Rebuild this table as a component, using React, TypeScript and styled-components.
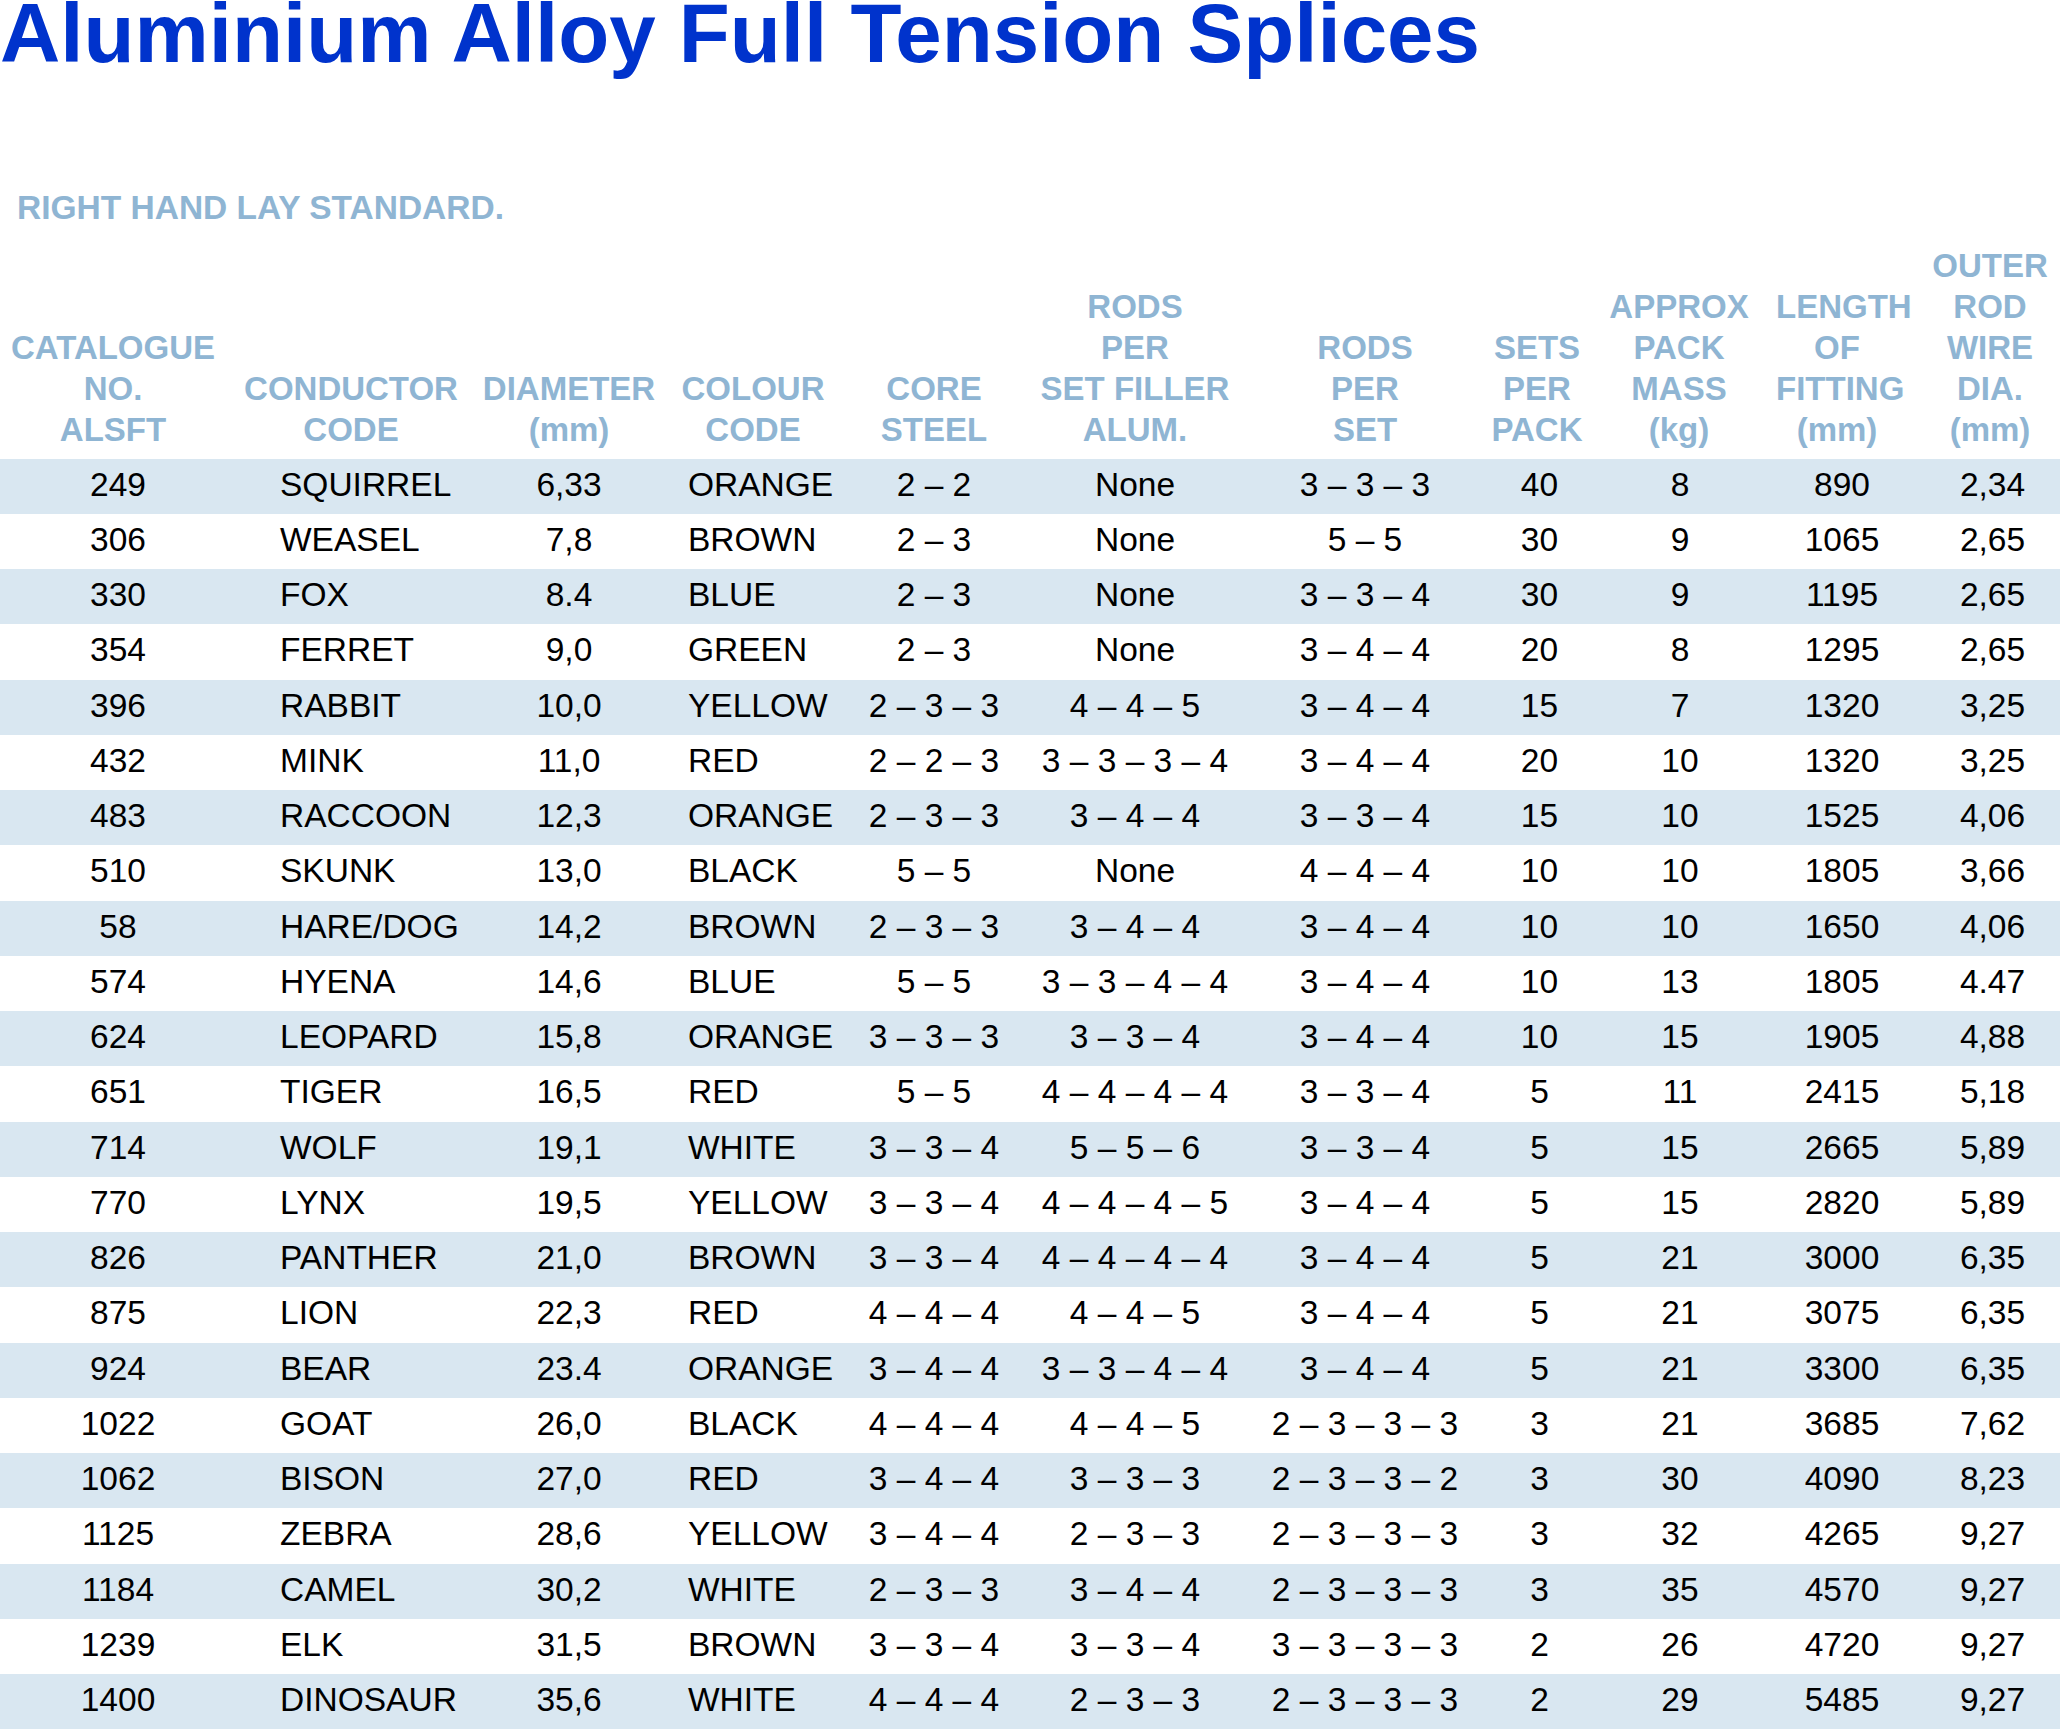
import React from "react";
import styled, { createGlobalStyle } from "styled-components";

const GlobalStyle = createGlobalStyle`
  html, body {
    margin: 0;
    padding: 0;
    background: #ffffff;
  }
  body {
    font-family: "Liberation Sans", Arial, Helvetica, sans-serif;
    overflow: hidden;
  }
`;

const COLS = "232px 238px 198px 170px 192px 210px 250px 94px 192px 128px 156px";

const Page = styled.div`
  width: 2060px;
  height: 1731px;
  overflow: hidden;
  display: flex;
  flex-direction: column;
`;

const Title = styled.h1`
  margin: -8px 0 0 0;
  font-size: 83.5px;
  line-height: 83px;
  font-weight: 700;
  color: #0033cc;
  white-space: nowrap;
`;

const Subtitle = styled.div`
  margin: 116px 0 0 17px;
  font-size: 33.5px;
  line-height: 33px;
  font-weight: 700;
  color: #8fb5d3;
`;

const Table = styled.div`
  margin-top: 21px;
  display: flex;
  flex-direction: column;
`;

const HeaderRow = styled.div`
  display: grid;
  grid-template-columns: ${COLS};
  align-items: end;
  padding-bottom: 8.5px;
`;

const HeaderCell = styled.div<{ $offset?: number }>`
  font-size: 33px;
  line-height: 41px;
  font-weight: 700;
  color: #8fb5d3;
  text-align: center;
  white-space: nowrap;
  padding-left: ${(p) => Math.max(0, p.$offset ?? 0)}px;
  padding-right: ${(p) => Math.max(0, -(p.$offset ?? 0))}px;
`;

const Row = styled.div<{ $band: boolean }>`
  display: grid;
  grid-template-columns: ${COLS};
  height: 55.25px;
  align-items: center;
  background: ${(p) => (p.$band ? "#d9e7f1" : "#ffffff")};
`;

const Cell = styled.div<{ $left?: number; $offset?: number }>`
  font-size: 33.5px;
  line-height: 51px;
  padding-bottom: 4px;
  color: #000000;
  white-space: nowrap;
  text-align: ${(p) => (p.$left !== undefined ? "left" : "center")};
  padding-left: ${(p) =>
    p.$left !== undefined ? p.$left : Math.max(0, p.$offset ?? 0)}px;
  padding-right: ${(p) =>
    p.$left !== undefined ? 0 : Math.max(0, -(p.$offset ?? 0))}px;
`;

type ColDef = {
  head: string[];
  left?: number;
  headOffset?: number;
  dataOffset?: number;
};

const columns: ColDef[] = [
  { head: ["CATALOGUE", "NO.", "ALSFT"], headOffset: -6, dataOffset: 4 },
  { head: ["CONDUCTOR", "CODE"], left: 48 },
  { head: ["DIAMETER", "(mm)"] },
  { head: ["COLOUR", "CODE"], left: 20 },
  { head: ["CORE", "STEEL"] },
  { head: ["RODS", "PER", "SET FILLER", "ALUM."] },
  { head: ["RODS", "PER", "SET"] },
  { head: ["SETS", "PER", "PACK"], dataOffset: 5 },
  { head: ["APPROX", "PACK", "MASS", "(kg)"], headOffset: -2 },
  { head: ["LENGTH", "OF", "FITTING", "(mm)"], headOffset: -6, dataOffset: 4 },
  { head: ["OUTER", "ROD", "WIRE", "DIA.", "(mm)"], headOffset: 16, dataOffset: 21 },
];

const raw = `249|SQUIRREL|6,33|ORANGE|2 – 2|None|3 – 3 – 3|40|8|890|2,34
306|WEASEL|7,8|BROWN|2 – 3|None|5 – 5|30|9|1065|2,65
330|FOX|8.4|BLUE|2 – 3|None|3 – 3 – 4|30|9|1195|2,65
354|FERRET|9,0|GREEN|2 – 3|None|3 – 4 – 4|20|8|1295|2,65
396|RABBIT|10,0|YELLOW|2 – 3 – 3|4 – 4 – 5|3 – 4 – 4|15|7|1320|3,25
432|MINK|11,0|RED|2 – 2 – 3|3 – 3 – 3 – 4|3 – 4 – 4|20|10|1320|3,25
483|RACCOON|12,3|ORANGE|2 – 3 – 3|3 – 4 – 4|3 – 3 – 4|15|10|1525|4,06
510|SKUNK|13,0|BLACK|5 – 5|None|4 – 4 – 4|10|10|1805|3,66
58|HARE/DOG|14,2|BROWN|2 – 3 – 3|3 – 4 – 4|3 – 4 – 4|10|10|1650|4,06
574|HYENA|14,6|BLUE|5 – 5|3 – 3 – 4 – 4|3 – 4 – 4|10|13|1805|4.47
624|LEOPARD|15,8|ORANGE|3 – 3 – 3|3 – 3 – 4|3 – 4 – 4|10|15|1905|4,88
651|TIGER|16,5|RED|5 – 5|4 – 4 – 4 – 4|3 – 3 – 4|5|11|2415|5,18
714|WOLF|19,1|WHITE|3 – 3 – 4|5 – 5 – 6|3 – 3 – 4|5|15|2665|5,89
770|LYNX|19,5|YELLOW|3 – 3 – 4|4 – 4 – 4 – 5|3 – 4 – 4|5|15|2820|5,89
826|PANTHER|21,0|BROWN|3 – 3 – 4|4 – 4 – 4 – 4|3 – 4 – 4|5|21|3000|6,35
875|LION|22,3|RED|4 – 4 – 4|4 – 4 – 5|3 – 4 – 4|5|21|3075|6,35
924|BEAR|23.4|ORANGE|3 – 4 – 4|3 – 3 – 4 – 4|3 – 4 – 4|5|21|3300|6,35
1022|GOAT|26,0|BLACK|4 – 4 – 4|4 – 4 – 5|2 – 3 – 3 – 3|3|21|3685|7,62
1062|BISON|27,0|RED|3 – 4 – 4|3 – 3 – 3|2 – 3 – 3 – 2|3|30|4090|8,23
1125|ZEBRA|28,6|YELLOW|3 – 4 – 4|2 – 3 – 3|2 – 3 – 3 – 3|3|32|4265|9,27
1184|CAMEL|30,2|WHITE|2 – 3 – 3|3 – 4 – 4|2 – 3 – 3 – 3|3|35|4570|9,27
1239|ELK|31,5|BROWN|3 – 3 – 4|3 – 3 – 4|3 – 3 – 3 – 3|2|26|4720|9,27
1400|DINOSAUR|35,6|WHITE|4 – 4 – 4|2 – 3 – 3|2 – 3 – 3 – 3|2|29|5485|9,27`;

const rows = raw.split("\n").map((l) => l.split("|"));

export default function App() {
  return (
    <Page>
      <GlobalStyle />
      <Title>Aluminium Alloy Full Tension Splices</Title>
      <Subtitle>RIGHT HAND LAY STANDARD.</Subtitle>
      <Table>
        <HeaderRow>
          {columns.map((c, i) => (
            <HeaderCell key={i} $offset={c.headOffset}>
              {c.head.map((h, j) => (
                <div key={j}>{h}</div>
              ))}
            </HeaderCell>
          ))}
        </HeaderRow>
        {rows.map((r, i) => (
          <Row key={i} $band={i % 2 === 0}>
            {r.map((v, j) => (
              <Cell key={j} $left={columns[j].left} $offset={columns[j].dataOffset}>
                {v}
              </Cell>
            ))}
          </Row>
        ))}
      </Table>
    </Page>
  );
}
